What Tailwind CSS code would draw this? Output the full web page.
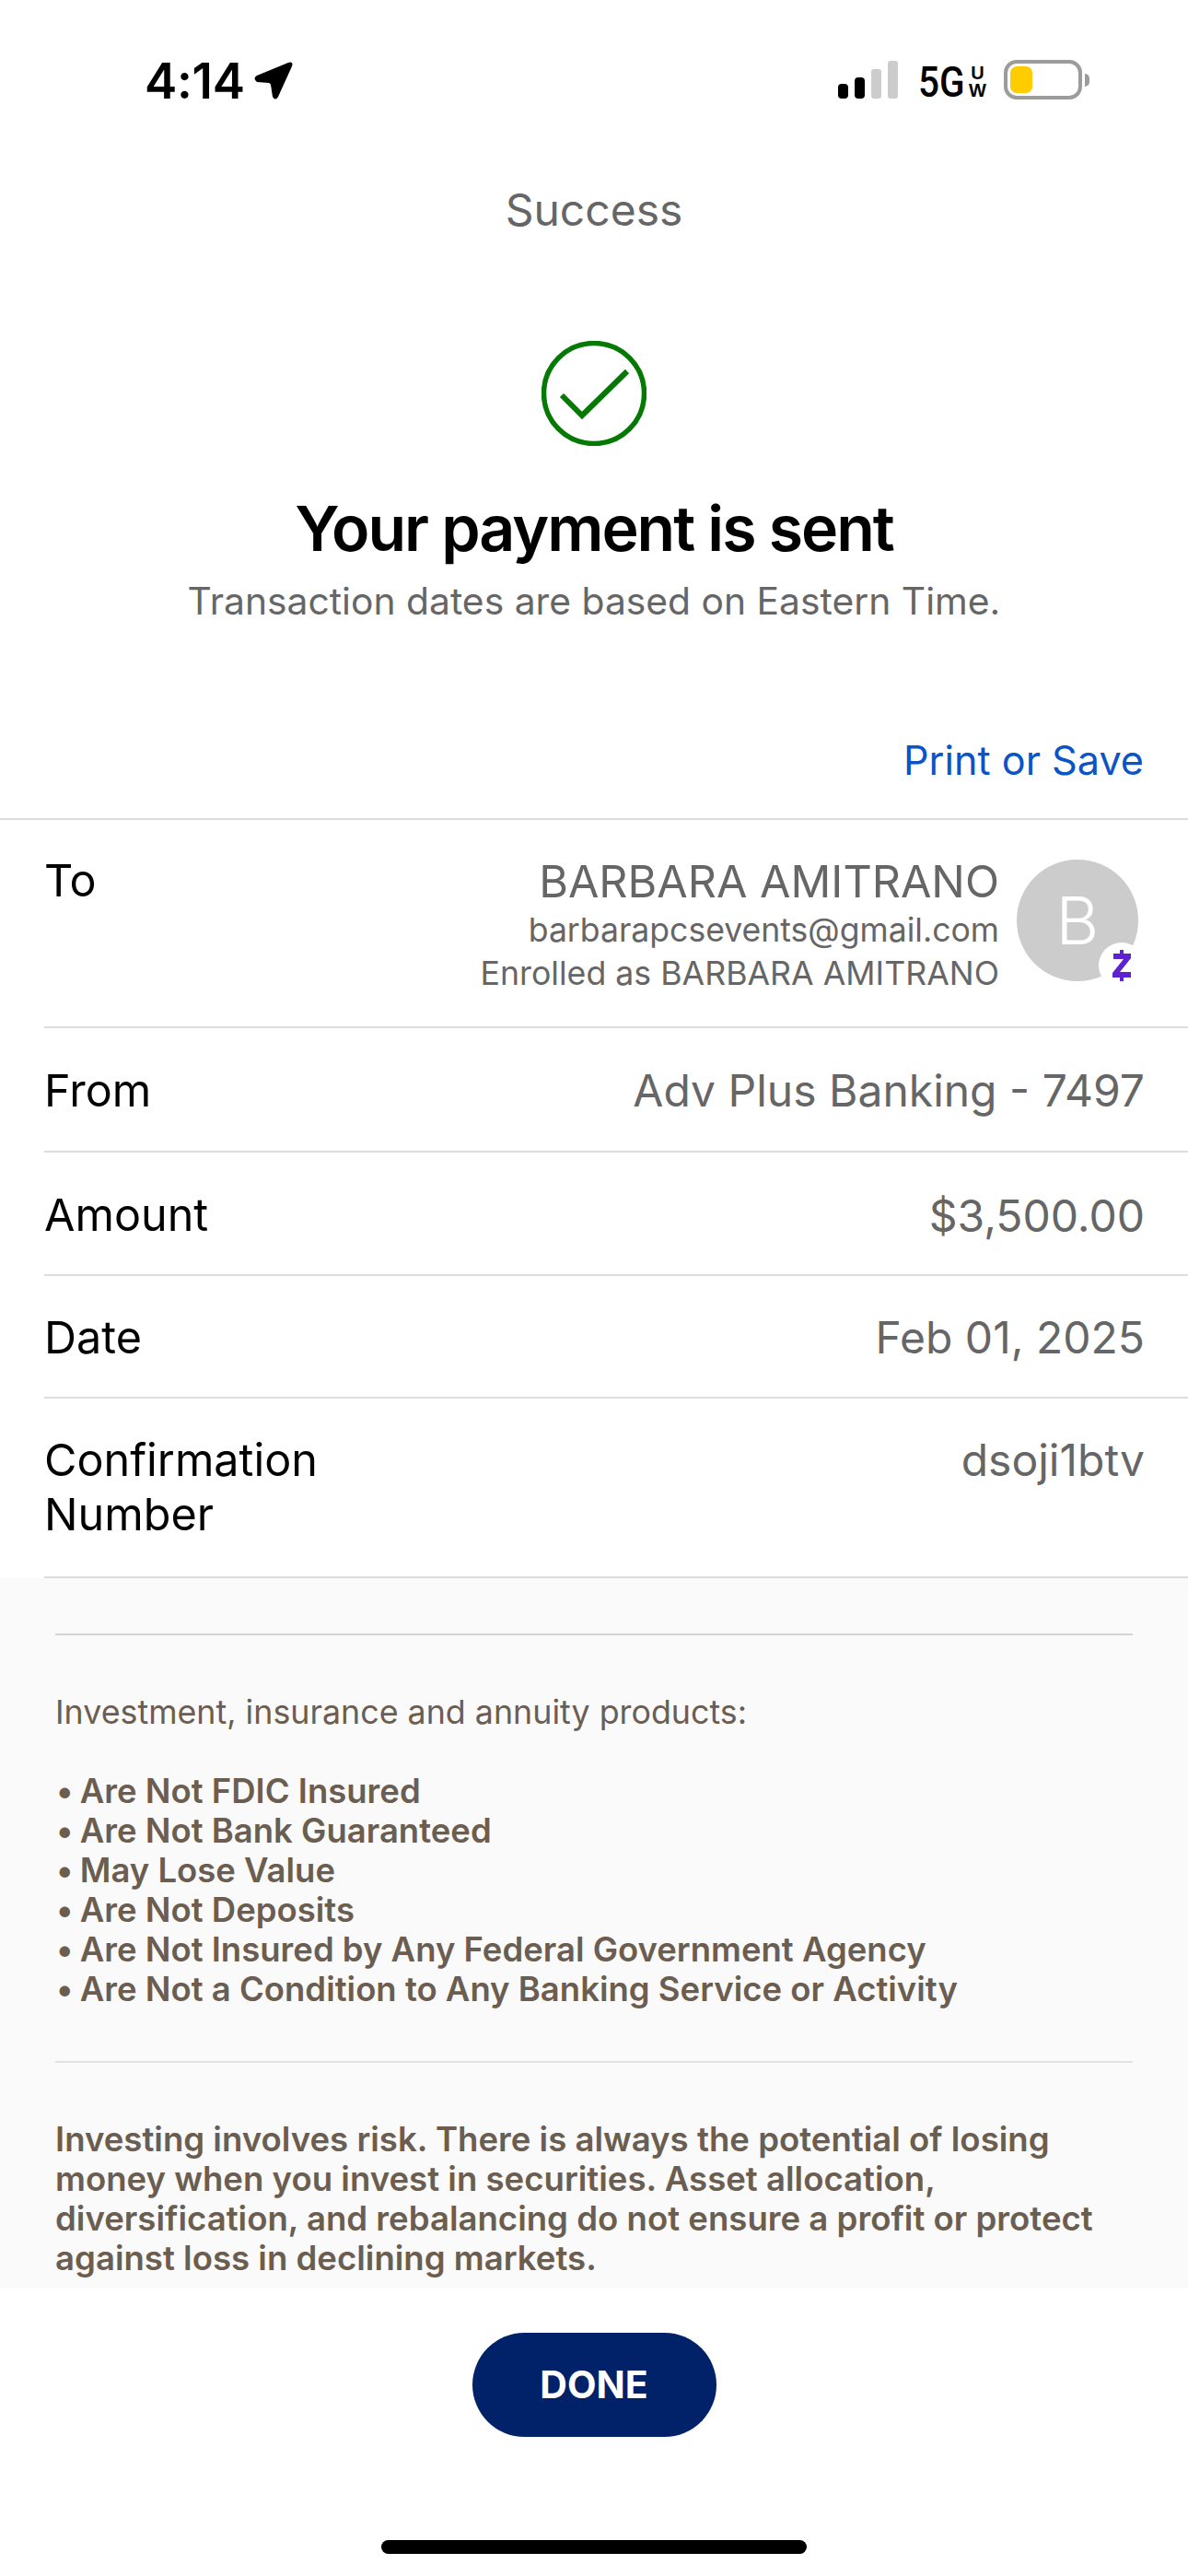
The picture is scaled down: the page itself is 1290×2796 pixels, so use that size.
<!DOCTYPE html>
<html lang="en">
<head>
    <meta charset="UTF-8">
    <meta name="viewport" content="width=device-width, initial-scale=1.0">
    <title>Payment Success</title>
    <script src="https://cdn.jsdelivr.net/npm/@tailwindcss/browser@4"></script>
</head>
<body class="bg-white font-['Inter',sans-serif]">
    <div class="w-[1290px] h-[2796px] flex flex-col overflow-hidden">
        <!-- status bar -->
        <div class="h-[176px] shrink-0 relative">
            <div class="absolute left-[157px] top-[50px] flex items-center gap-[10px]">
                <span class="text-[53px] leading-[76px] font-semibold text-black tracking-[-0.300px]">4:14</span>
                <svg width="42" height="42" viewBox="0 0 42 42"><path d="M3 15 L37 1 Q43 -1 41 5 L26 38 Q23 43 20 38 L18 25 Q17.500 23.500 16 23 L3 22 Q-2 18 3 15 Z" fill="#000"/></svg>
            </div>
            <div class="absolute left-[910px] top-[66px] flex items-end gap-[7px] h-[41px]">
                <div class="w-[11px] h-[16px] rounded-[4px] bg-black"></div>
                <div class="w-[11px] h-[23px] rounded-[4px] bg-black"></div>
                <div class="w-[11px] h-[32px] rounded-[3px] bg-[#cccccc]"></div>
                <div class="w-[11px] h-[41px] rounded-[3px] bg-[#cccccc]"></div>
            </div>
            <div class="absolute left-[997px] top-[68px] flex gap-[7px]">
                <div class="w-[48px]">
                    <span class="inline-block origin-left scale-x-[0.88] text-[46px] leading-[42px] font-medium text-black font-['Roboto']">5G</span>
                </div>
                <div class="flex flex-col items-center text-[20px] leading-[19px] font-bold text-black font-['Liberation_Sans'] pt-[2px]">
                    <span>U</span>
                    <span>W</span>
                </div>
            </div>
            <div class="absolute left-[1090px] top-[65px] flex items-center gap-[3px]">
                <div class="w-[85px] h-[43px] rounded-[14px] border-[4px] border-[#9c9c9c] p-[3px]">
                    <div class="w-[24px] h-full rounded-[7px] bg-[#ffcc00]"></div>
                </div>
                <div class="w-[5px] h-[14px] rounded-r-full bg-[#9c9c9c]"></div>
            </div>
        </div>

        <!-- header -->
        <div class="h-[712px] shrink-0 flex flex-col items-center">
            <div class="text-[48px] leading-[60px] text-[#666666] mt-[22px]">Success</div>
            <svg class="mt-[112px]" width="114" height="114" viewBox="0 0 114 114" fill="none" stroke="#047a04">
                <circle cx="57" cy="57" r="54.500" stroke-width="5.500"/>
                <path d="M22 59 L44 81 L93 33" stroke-width="6"/>
            </svg>
            <div class="text-[68px] leading-[80px] font-semibold text-black tracking-[-2px] mt-[49px]">Your payment is sent</div>
            <div class="text-[40.800px] leading-[50px] text-[#666666] mt-[14px]">Transaction dates are based on Eastern Time.</div>
            <div class="self-end pr-[48px] text-[43.200px] leading-[56px] text-[#0a54c6] mt-[120px]">Print or Save</div>
        </div>

        <!-- details -->
        <div class="h-[825px] shrink-0 flex flex-col">
            <div class="h-[228px] border-t-2 border-[#dddddd] flex pl-[48px]">
                <div class="flex-1 border-b-2 border-[#dddddd] flex justify-between pr-[54px]">
                    <div class="text-[48.500px] leading-[60px] text-black mt-[36px]">To</div>
                    <div class="flex gap-[19px] pt-[43px]">
                        <div class="flex flex-col items-end text-[#666666]">
                            <div class="text-[48.500px] leading-[56px] -mt-[4px]">BARBARA AMITRANO</div>
                            <div class="text-[35.600px] leading-[46px] mt-[2px]">barbarapcsevents@gmail.com</div>
                            <div class="text-[35.700px] leading-[46px]">Enrolled as BARBARA AMITRANO</div>
                        </div>
                        <div class="relative w-[132px] h-[132px] rounded-full bg-[#cccccc] flex items-center justify-center text-[72px] font-light text-white">
                            B
                            <div class="absolute left-[89px] top-[90px] w-[50px] h-[50px] rounded-full bg-white flex items-center justify-center">
                                <svg width="20" height="34" viewBox="0 0 20 34" fill="#5f22d0"><path d="M8 0h4v4h8v5L8 24h12v6h-8v4H8v-4H0v-5L12 10H1V4h7z"/></svg>
                            </div>
                        </div>
                    </div>
                </div>
            </div>
            <div class="h-[135px] ml-[48px] border-b-2 border-[#dddddd] flex justify-between items-center pt-[3px] pr-[47px] text-[48.500px]">
                <span class="text-black">From</span>
                <span class="text-[#666666] text-[48px]">Adv Plus Banking - 7497</span>
            </div>
            <div class="h-[134px] ml-[48px] border-b-2 border-[#dddddd] flex justify-between items-center pt-[5px] pr-[47px] text-[48.500px]">
                <span class="text-black">Amount</span>
                <span class="text-[#666666] text-[48px]">$3,500.00</span>
            </div>
            <div class="h-[133px] ml-[48px] border-b-2 border-[#dddddd] flex justify-between items-start pt-[37px] pr-[47px] text-[48.500px] leading-[60px]">
                <span class="text-black">Date</span>
                <span class="text-[#666666] text-[48px]">Feb 01, 2025</span>
            </div>
            <div class="h-[195px] ml-[48px] border-b-2 border-[#dddddd] flex justify-between items-start pt-[37px] pr-[47px] text-[48.500px] leading-[59px]">
                <span class="text-black">Confirmation<br>Number</span>
                <span class="text-[#666666] text-[48px]">dsoji1btv</span>
            </div>
        </div>

        <!-- disclosures -->
        <div class="h-[771px] shrink-0 bg-[#fafafa] px-[60px] overflow-hidden text-[#6b5e51] text-[36px] leading-[43px]">
            <div class="mt-[60px] border-t-2 border-[#d4d4d4]"></div>
            <div class="mt-[62px] text-[35.800px]">Investment, insurance and annuity products:</div>
            <div class="mt-[43px] font-semibold text-[36.500px]">
                <div><span class="font-normal -mr-[3px]">•</span> Are Not FDIC Insured</div>
                <div><span class="font-normal -mr-[3px]">•</span> Are Not Bank Guaranteed</div>
                <div><span class="font-normal -mr-[3px]">•</span> May Lose Value</div>
                <div><span class="font-normal -mr-[3px]">•</span> Are Not Deposits</div>
                <div><span class="font-normal -mr-[3px]">•</span> Are Not Insured by Any Federal Government Agency</div>
                <div><span class="font-normal -mr-[3px]">•</span> Are Not a Condition to Any Banking Service or Activity</div>
            </div>
            <div class="mt-[56px] border-t-2 border-[#e2e2e2]"></div>
            <div class="mt-[62px] font-semibold text-[36.600px]">Investing involves risk. There is always the potential of losing money when you invest in securities. Asset allocation, diversification, and rebalancing do not ensure a profit or protect against loss in declining markets.</div>
        </div>

        <!-- footer -->
        <div class="flex-1 flex flex-col items-center">
            <div class="mt-[48px] w-[265px] h-[113px] rounded-full bg-[#012169] flex items-center justify-center text-[41px] font-bold text-white">DONE</div>
            <div class="mt-[112px] w-[462px] h-[15px] rounded-full bg-black"></div>
        </div>
    </div>
</body>
</html>
